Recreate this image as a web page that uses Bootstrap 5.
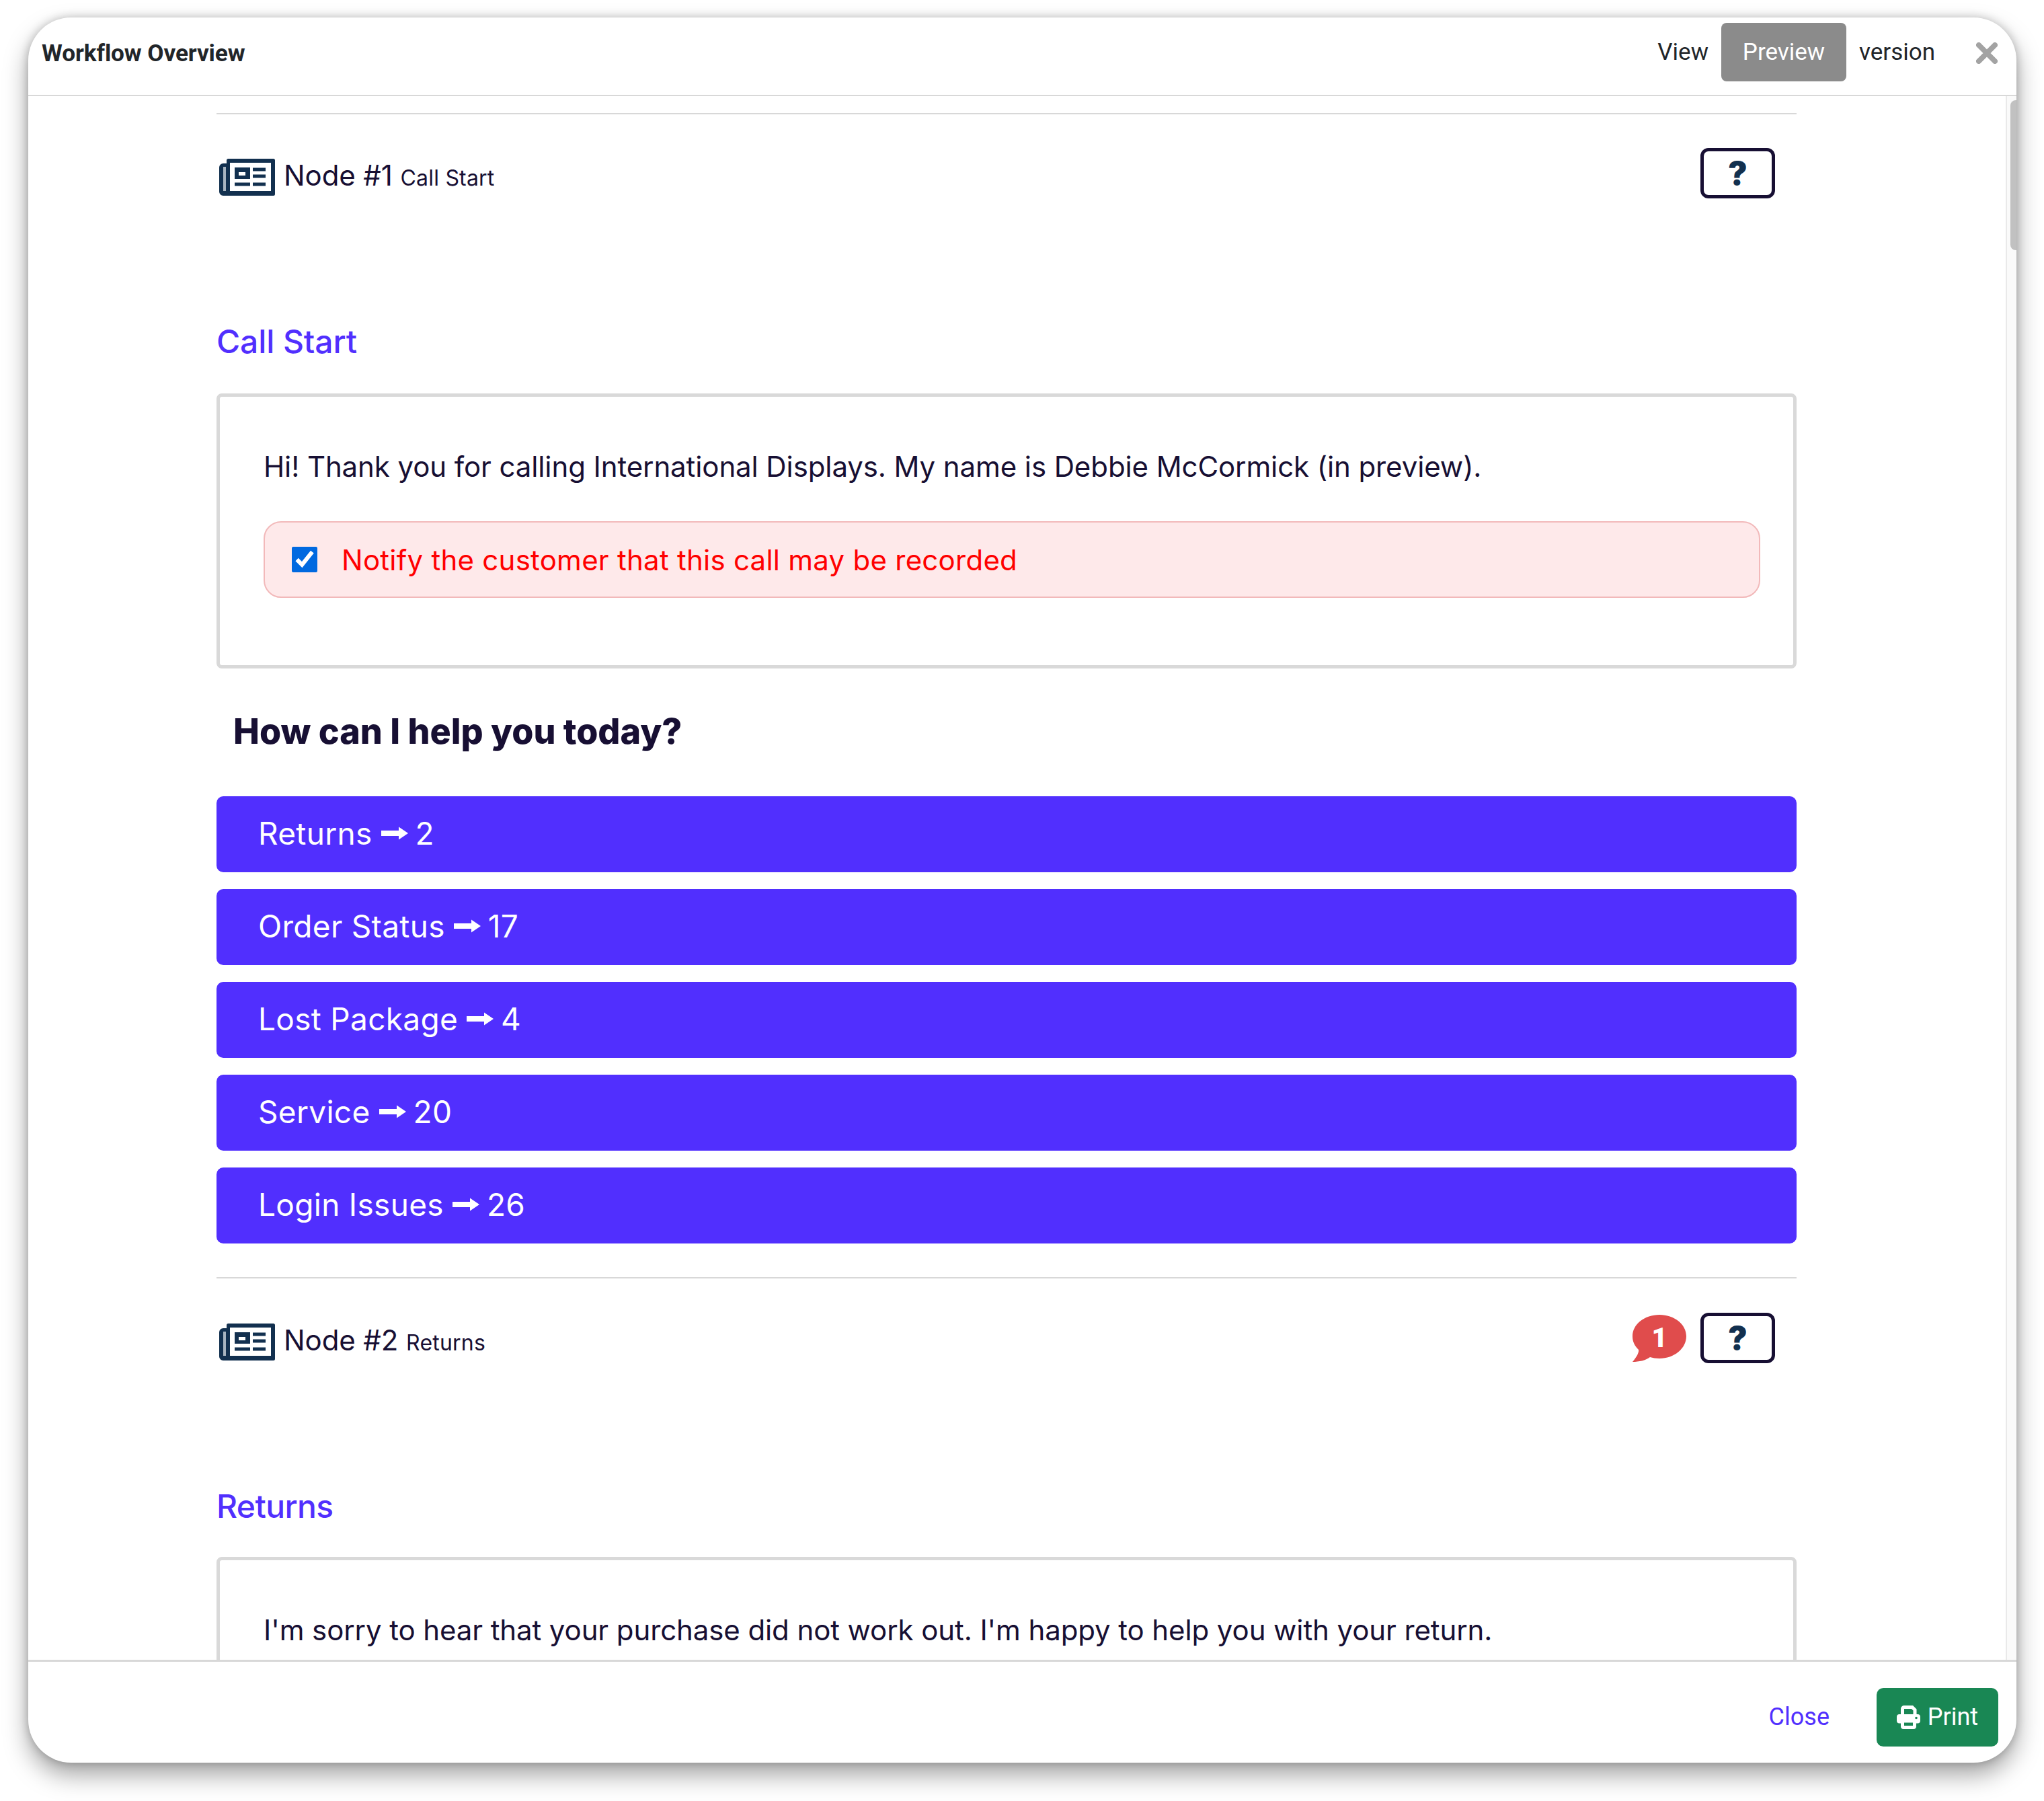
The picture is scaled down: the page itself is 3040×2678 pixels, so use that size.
<!DOCTYPE html>
<html lang="en">
<head>
<meta charset="utf-8">
<title>Workflow Overview</title>
<link href="https://cdn.jsdelivr.net/npm/bootstrap@5.3.0/dist/css/bootstrap.min.css" rel="stylesheet">
<style>
html,body{height:100%;background:#fff;}
body{margin:0;padding:26px 41px 57px 42px;overflow:hidden;font-family:"Inter","Liberation Sans",sans-serif;color:#170f33;}
.wf-window{height:2595px;border-radius:64px;background:#fff;box-shadow:0 18px 36px rgba(0,0,0,.36),0 0 14px rgba(0,0,0,.22);overflow:hidden;}
.wf-header{height:117px;border-bottom:2px solid #d8d8d8;padding:8px 28px 0 20px;flex:none;}
.wf-title{font:700 35.2px/1 "Roboto",sans-serif;color:#212529;margin:0;padding-bottom:16px;letter-spacing:-.1px;}
.wf-switch{font:400 35px/1 "Roboto",sans-serif;color:#212529;padding-bottom:20px;gap:19px;margin-right:61px;}
.wf-preview{width:186px;height:87px;background:#8b8b8b;color:#fff;border:0;border-radius:8px;font:400 35px/1 "Roboto",sans-serif;padding:0;margin-top:0;}
.wf-x{width:32px;height:32px;margin-bottom:18px;}
.wf-main{min-height:0;overflow:hidden;}
.wf-scroll{min-width:0;overflow:hidden;padding:25px 0 0 280px;}
.wf-track{width:16px;flex:none;background:#fafafa;border-left:2px solid #e9e9e9;padding:6px 0 0 5px;}
.wf-thumb{height:223px;background:#c1c1c1;border-radius:8px 0 0 8px;}
.wf-col{width:2350px;}
.wf-rule{height:2px;background:#d8d8d8;margin:0;opacity:1;border:0;}
.wf-nodehead{height:75px;margin-top:50px;padding-right:32px;}
.wf-nodehead-next{margin-top:51px;}
.wf-news{width:84px;height:56px;margin:12px 12px 0 4px;flex:none;}
.wf-nodename{font-size:42px;line-height:1;font-weight:400;letter-spacing:-.1px;padding-top:6px;}
.wf-nodesub{font-size:32px;letter-spacing:.2px;margin-left:0;}
.wf-help{width:111px;height:75px;background:#fff;border:5px solid #170f33;border-radius:12px;padding:0;color:#12304f;font:900 48px/1 "Inter",sans-serif;}
.wf-bubble{width:80px;height:70px;margin-right:21px;}
.wf-name{font-size:48px;line-height:60px;font-weight:500;color:#512ffe;margin:183px 0 47px;letter-spacing:-.1px;}
.wf-name-next{margin:183px 0 45px;letter-spacing:-.6px;}
.wf-box{height:409px;border:5px solid #d9d9d9;border-radius:8px;padding:71px 49px 0 65px;background:#fff;}
.wf-say{font-size:42px;line-height:66px;margin:0 0 48px;letter-spacing:-.1px;}
.wf-warn{height:114px;background:#fee9ea;border:2px solid #f2b9ba;border-radius:26px;padding:0 0 0 40px;color:#f00;margin:0;font-size:42px;gap:36px;}
.wf-warn input{width:38px;height:38px;accent-color:#0069e0;margin:0;flex:none;}
.wf-warn label{letter-spacing:.25px;}
.wf-ask{font-size:52px;line-height:76px;font-weight:800;margin:56px 0 58px 25px;letter-spacing:0;}
.wf-choice{height:113px;background:#512ffe;color:#fff;border:0;border-radius:10px;font-size:46px;text-align:left;padding:0 0 2px 62px;margin-bottom:25px;letter-spacing:.3px;}
.wf-choice:last-of-type{margin-bottom:50px;}
.wf-arrow{width:40px;height:20px;margin:0 11px 0 13px;vertical-align:7px;}
.wf-footer{height:153px;border-top:3px solid #d8d8d8;padding:14px 27px 0 0;gap:70px;flex:none;}
.wf-close{font:400 36px/1 "Roboto",sans-serif;color:#512ffe;text-decoration:none;}
.wf-print{width:181px;height:87px;background:#198754;color:#fff;border:0;border-radius:10px;font:400 36px/1 "Roboto",sans-serif;gap:11px;padding:0;}
</style>
</head>
<body>
<div class="wf-window d-flex flex-column">
  <header class="wf-header d-flex align-items-center justify-content-between">
    <h1 class="wf-title">Workflow Overview</h1>
    <div class="d-flex align-items-center">
      <div class="wf-switch d-flex align-items-center">
        <span>View</span>
        <button type="button" class="btn wf-preview">Preview</button>
        <span>version</span>
      </div>
      <svg class="wf-x" viewBox="0 0 32 32" aria-label="Close"><path d="M4 4 28 28M28 4 4 28" stroke="#a3a3a3" stroke-width="8" stroke-linecap="round"/></svg>
    </div>
  </header>
  <div class="wf-main d-flex flex-grow-1">
    <div class="wf-scroll flex-grow-1">
      <div class="wf-col">
        <hr class="wf-rule">
        <div class="wf-nodehead d-flex align-items-center">
          <svg class="wf-news" viewBox="0 0 84 56"><use href="#news"/></svg>
          <span class="wf-nodename">Node #1 <span class="wf-nodesub">Call Start</span></span>
          <button type="button" class="btn wf-help ms-auto">?</button>
        </div>
        <h2 class="wf-name">Call Start</h2>
        <div class="wf-box">
          <p class="wf-say">Hi! Thank you for calling International Displays. My name is Debbie McCormick (in preview).</p>
          <div class="alert wf-warn d-flex align-items-center">
            <input type="checkbox" id="rec" checked>
            <label for="rec">Notify the customer that this call may be recorded</label>
          </div>
        </div>
        <h3 class="wf-ask">How can I help you today?</h3>
        <button type="button" class="btn wf-choice d-block w-100">Returns<svg class="wf-arrow" viewBox="0 0 40 20"><use href="#arr"/></svg>2</button>
        <button type="button" class="btn wf-choice d-block w-100">Order Status<svg class="wf-arrow" viewBox="0 0 40 20"><use href="#arr"/></svg>17</button>
        <button type="button" class="btn wf-choice d-block w-100">Lost Package<svg class="wf-arrow" viewBox="0 0 40 20"><use href="#arr"/></svg>4</button>
        <button type="button" class="btn wf-choice d-block w-100">Service<svg class="wf-arrow" viewBox="0 0 40 20"><use href="#arr"/></svg>20</button>
        <button type="button" class="btn wf-choice d-block w-100">Login Issues<svg class="wf-arrow" viewBox="0 0 40 20"><use href="#arr"/></svg>26</button>
        <hr class="wf-rule">
        <div class="wf-nodehead wf-nodehead-next d-flex align-items-center">
          <svg class="wf-news" viewBox="0 0 84 56"><use href="#news"/></svg>
          <span class="wf-nodename">Node #2 <span class="wf-nodesub">Returns</span></span>
          <svg class="wf-bubble ms-auto" viewBox="0 0 80 70"><path d="M40 0C62 0 80 14 80 32S62 65 40 65C35 65 30 64 26 63 19 68 10 70 0 70 6 63 10 56 9 52 3 46 0 40 0 32 0 14 18 0 40 0Z" fill="#e04c4c"/><text x="40" y="48" text-anchor="middle" fill="#fff" font-family="Roboto" font-weight="900" font-size="40">1</text></svg>
          <button type="button" class="btn wf-help">?</button>
        </div>
        <h2 class="wf-name wf-name-next">Returns</h2>
        <div class="wf-box">
          <p class="wf-say">I'm sorry to hear that your purchase did not work out. I'm happy to help you with your return.</p>
        </div>
      </div>
    </div>
    <div class="wf-track"><div class="wf-thumb"></div></div>
  </div>
  <footer class="wf-footer d-flex align-items-center justify-content-end">
    <a href="#" class="wf-close">Close</a>
    <button type="button" class="btn wf-print d-flex align-items-center justify-content-center">
      <svg width="35" height="35" viewBox="0 0 35 35" aria-hidden="true">
        <path d="M8.5 14V5A2.5 2.5 0 0 1 11 2.5h12L27 6.500V14" fill="none" stroke="#fff" stroke-width="5"/>
        <rect x="0" y="13" width="35" height="13.500" rx="4" fill="#fff"/>
        <circle cx="29" cy="18.500" r="1.800" fill="#198754"/>
        <rect x="8.500" y="23" width="18" height="9.500" rx="1.500" fill="#198754" stroke="#fff" stroke-width="5"/>
      </svg>
      Print
    </button>
  </footer>
</div>
<svg width="0" height="0" class="d-block" aria-hidden="true"><defs>
  <g id="news">
    <path d="M11 7V2.500A2.500 2.500 0 0 1 13.500 0H80.500A2.500 2.500 0 0 1 83 2.500V52.500A2.500 2.500 0 0 1 80.500 55H6A6 6 0 0 1 0 49V13A6 6 0 0 1 6 7Z" fill="#12304f"/>
    <rect x="6" y="12" width="4" height="36" fill="#a8b4c0"/>
    <rect x="16" y="6" width="61" height="42" fill="#fff"/>
    <rect x="23" y="13" width="23" height="17" fill="#12304f"/><rect x="29" y="20" width="10" height="5" fill="#fff"/>
    <path d="M50 16H69M50 26H69M23 38H46M50 38H69" stroke="#12304f" stroke-width="5"/>
  </g>
  <path id="arr" d="M0 6H26V0.500L40 10 26 19.500V14H0Z" fill="#fff"/>
</defs></svg>
</body>
</html>
